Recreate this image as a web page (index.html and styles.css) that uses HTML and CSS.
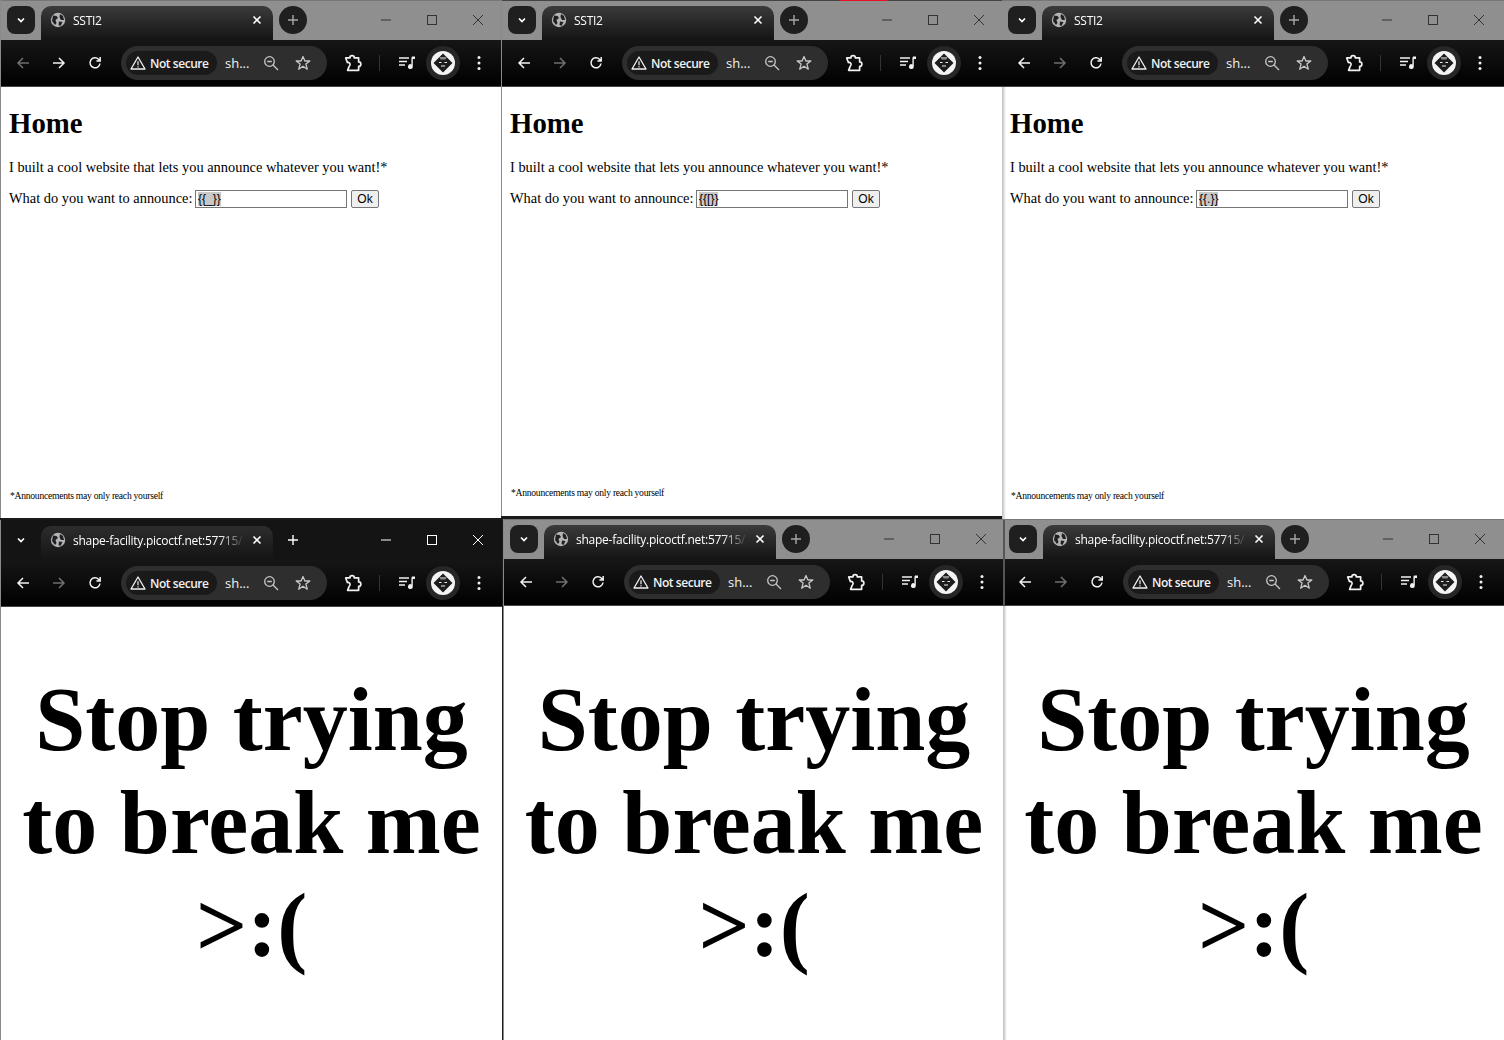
FILE: index.html
```html
<!DOCTYPE html>
<html lang="en">

<head>
    <meta charset="UTF-8">
    <title>SSTI2</title>
    <link rel="stylesheet" href="styles.css">
</head>

<body>
    <svg class="sprites" width="0" height="0">
        <symbol id="i-chevron" viewBox="0 0 12 12"><path d="M3 4.5 6 7.5 9 4.5" fill="none" stroke="currentColor" stroke-width="1.7"/></symbol>
        <symbol id="i-globe" viewBox="0 0 16 16"><circle cx="8" cy="8" r="7.2" fill="currentColor"/><path d="M3 3.5 6.5 4 8 6 5.5 8 6.5 11 5 13 2 9ZM10 2 13 4 14 8 11 8 9.5 5ZM9 9.5 12.5 10 10.5 14 8.5 13Z" fill="#202124"/></symbol>
        <symbol id="i-close" viewBox="0 0 10 10"><path d="M1.5 1.5 8.5 8.5M8.5 1.5 1.5 8.5" stroke="currentColor" stroke-width="1.6"/></symbol>
        <symbol id="i-plus" viewBox="0 0 12 12"><path d="M6 1V11M1 6H11" stroke="currentColor" stroke-width="1.4"/></symbol>
        <symbol id="i-back" viewBox="0 0 14 14"><path d="M13 7H2M7 2 2 7 7 12" fill="none" stroke="currentColor" stroke-width="1.5"/></symbol>
        <symbol id="i-forward" viewBox="0 0 14 14"><path d="M1 7H12M7 2 12 7 7 12" fill="none" stroke="currentColor" stroke-width="1.5"/></symbol>
        <symbol id="i-reload" viewBox="0 0 14 14"><path d="M12 7.5A5 5 0 1 1 10.5 3.2L12 4.6M12.2 1V4.9H8.4" fill="none" stroke="currentColor" stroke-width="1.5"/></symbol>
        <symbol id="i-warn" viewBox="0 0 16 16"><path d="M8 2 15 14H1Z" fill="none" stroke="currentColor" stroke-width="1.3" stroke-linejoin="round"/><path d="M8 6.2V10.2M8 11.2V12.6" stroke="currentColor" stroke-width="1.2"/></symbol>
        <symbol id="i-zoom" viewBox="0 0 16 16"><circle cx="6.5" cy="6.5" r="4.8" fill="none" stroke="currentColor" stroke-width="1.3"/><path d="M10 10 15 15M4.2 6.5H8.8" stroke="currentColor" stroke-width="1.3"/></symbol>
        <symbol id="i-star" viewBox="0 0 16 16"><path d="M8 1.5 9.9 6H14.8L10.9 9.1 12.3 14.2 8 11.3 3.7 14.2 5.1 9.1 1.2 6H6.1Z" fill="none" stroke="currentColor" stroke-width="1.3" stroke-linejoin="round"/></symbol>
        <symbol id="i-ext" viewBox="0 0 16 16"><path d="M1.5 3.5H5.2A2 2 0 0 1 9.2 3.5H13V7A1.8 1.8 0 0 1 13 11V14.5H3.2L4.6 11A1.9 1.9 0 0 0 3 7.6Z" fill="none" stroke="currentColor" stroke-width="1.5" stroke-linejoin="round"/></symbol>
        <symbol id="i-media" viewBox="0 0 16 16"><path d="M0 3H10M0 6.5H8M0 10H6" stroke="currentColor" stroke-width="1.5"/><path d="M13 1.5H16V4H13.8V11.5A2.4 2.4 0 1 1 12.4 9.4V3Z" fill="currentColor"/></symbol>
        <symbol id="i-avatar" viewBox="0 0 24 24"><circle cx="12" cy="12" r="12" fill="#f4f4f4"/><path d="M12 2.5 21.5 12 12 21.5 2.5 12Z" fill="#1c1c1c"/><path d="M8.5 6H15.5L14.5 8.5H9.5Z" fill="#8a8a8a"/><path d="M8 11.5H10.5M13.5 11.5H16M10 15H14" stroke="#eee" stroke-width="1.2"/></symbol>
        <symbol id="i-more" viewBox="0 0 4 16"><circle cx="2" cy="2.5" r="1.5" fill="currentColor"/><circle cx="2" cy="8" r="1.5" fill="currentColor"/><circle cx="2" cy="13.5" r="1.5" fill="currentColor"/></symbol>
        <symbol id="i-min" viewBox="0 0 12 12"><path d="M1 6H11" stroke="currentColor"/></symbol>
        <symbol id="i-max" viewBox="0 0 12 12"><rect x="1.5" y="1.5" width="9" height="9" fill="none" stroke="currentColor"/></symbol>
        <symbol id="i-x" viewBox="0 0 12 12"><path d="M1 1 11 11M11 1 1 11" stroke="currentColor"/></symbol>
    </svg>

    <section class="window win-1">
        <div class="tabstrip">
            <span class="strip-btn"><svg class="ico-12"><use href="#i-chevron"/></svg></span>
            <div class="tab"><svg class="ico-16 tab-globe"><use href="#i-globe"/></svg><span class="tab-title">SSTI2</span><svg class="ico-10"><use href="#i-close"/></svg></div>
            <span class="strip-btn new-tab"><svg class="ico-12"><use href="#i-plus"/></svg></span>
            <div class="caption"><svg class="ico-12"><use href="#i-min"/></svg><svg class="ico-12"><use href="#i-max"/></svg><svg class="ico-12"><use href="#i-x"/></svg></div>
        </div>
        <div class="toolbar">
            <svg class="ico-14 nav off"><use href="#i-back"/></svg><svg class="ico-14 nav"><use href="#i-forward"/></svg><svg class="ico-14 nav"><use href="#i-reload"/></svg>
            <div class="omnibox"><span class="chip"><svg class="ico-16"><use href="#i-warn"/></svg>Not secure</span><span class="host">sh...</span><svg class="ico-16 zoom-ico"><use href="#i-zoom"/></svg><svg class="ico-16 star-ico"><use href="#i-star"/></svg></div>
            <svg class="ext"><use href="#i-ext"/></svg><span class="divider"></span><svg class="ico-16 media"><use href="#i-media"/></svg><span class="avatar-ring"><svg class="ico-24"><use href="#i-avatar"/></svg></span><svg class="more"><use href="#i-more"/></svg>
        </div>
        <main class="page">
            <h1 class="home-title">Home</h1>
            <p class="page-text">I built a cool website that lets you announce whatever you want!*</p>
            <div class="announce">What do you want to announce: <div class="fake-input"><span class="selected">{{_}}</span></div><span class="ok-btn">Ok</span></div>
            <small class="footnote">*Announcements may only reach yourself</small>
        </main>
    </section>

    <section class="window win-2">
        <span class="red-sliver"></span>
        <div class="tabstrip">
            <span class="strip-btn"><svg class="ico-12"><use href="#i-chevron"/></svg></span>
            <div class="tab"><svg class="ico-16 tab-globe"><use href="#i-globe"/></svg><span class="tab-title">SSTI2</span><svg class="ico-10"><use href="#i-close"/></svg></div>
            <span class="strip-btn new-tab"><svg class="ico-12"><use href="#i-plus"/></svg></span>
            <div class="caption"><svg class="ico-12"><use href="#i-min"/></svg><svg class="ico-12"><use href="#i-max"/></svg><svg class="ico-12"><use href="#i-x"/></svg></div>
        </div>
        <div class="toolbar">
            <svg class="ico-14 nav"><use href="#i-back"/></svg><svg class="ico-14 nav off"><use href="#i-forward"/></svg><svg class="ico-14 nav"><use href="#i-reload"/></svg>
            <div class="omnibox"><span class="chip"><svg class="ico-16"><use href="#i-warn"/></svg>Not secure</span><span class="host">sh...</span><svg class="ico-16 zoom-ico"><use href="#i-zoom"/></svg><svg class="ico-16 star-ico"><use href="#i-star"/></svg></div>
            <svg class="ext"><use href="#i-ext"/></svg><span class="divider"></span><svg class="ico-16 media"><use href="#i-media"/></svg><span class="avatar-ring"><svg class="ico-24"><use href="#i-avatar"/></svg></span><svg class="more"><use href="#i-more"/></svg>
        </div>
        <main class="page">
            <h1 class="home-title">Home</h1>
            <p class="page-text">I built a cool website that lets you announce whatever you want!*</p>
            <div class="announce">What do you want to announce: <div class="fake-input"><span class="selected">{{[}}</span></div><span class="ok-btn">Ok</span></div>
            <small class="footnote foot-high">*Announcements may only reach yourself</small>
        </main>
    </section>

    <section class="window win-3">
        <div class="tabstrip">
            <span class="strip-btn"><svg class="ico-12"><use href="#i-chevron"/></svg></span>
            <div class="tab"><svg class="ico-16 tab-globe"><use href="#i-globe"/></svg><span class="tab-title">SSTI2</span><svg class="ico-10"><use href="#i-close"/></svg></div>
            <span class="strip-btn new-tab"><svg class="ico-12"><use href="#i-plus"/></svg></span>
            <div class="caption"><svg class="ico-12"><use href="#i-min"/></svg><svg class="ico-12"><use href="#i-max"/></svg><svg class="ico-12"><use href="#i-x"/></svg></div>
        </div>
        <div class="toolbar">
            <svg class="ico-14 nav"><use href="#i-back"/></svg><svg class="ico-14 nav off"><use href="#i-forward"/></svg><svg class="ico-14 nav"><use href="#i-reload"/></svg>
            <div class="omnibox"><span class="chip"><svg class="ico-16"><use href="#i-warn"/></svg>Not secure</span><span class="host">sh...</span><svg class="ico-16 zoom-ico"><use href="#i-zoom"/></svg><svg class="ico-16 star-ico"><use href="#i-star"/></svg></div>
            <svg class="ext"><use href="#i-ext"/></svg><span class="divider"></span><svg class="ico-16 media"><use href="#i-media"/></svg><span class="avatar-ring"><svg class="ico-24"><use href="#i-avatar"/></svg></span><svg class="more"><use href="#i-more"/></svg>
        </div>
        <main class="page">
            <h1 class="home-title">Home</h1>
            <p class="page-text">I built a cool website that lets you announce whatever you want!*</p>
            <div class="announce">What do you want to announce: <div class="fake-input"><span class="selected">{{.}}</span></div><span class="ok-btn">Ok</span></div>
            <small class="footnote">*Announcements may only reach yourself</small>
        </main>
    </section>

    <section class="window win-4 focused">
        <div class="tabstrip">
            <span class="strip-btn"><svg class="ico-12"><use href="#i-chevron"/></svg></span>
            <div class="tab"><svg class="ico-16 tab-globe"><use href="#i-globe"/></svg><span class="tab-title">shape-facility.picoctf.net:57715/</span><svg class="ico-10"><use href="#i-close"/></svg></div>
            <span class="strip-btn new-tab"><svg class="ico-12"><use href="#i-plus"/></svg></span>
            <div class="caption"><svg class="ico-12"><use href="#i-min"/></svg><svg class="ico-12"><use href="#i-max"/></svg><svg class="ico-12"><use href="#i-x"/></svg></div>
        </div>
        <div class="toolbar">
            <svg class="ico-14 nav"><use href="#i-back"/></svg><svg class="ico-14 nav off"><use href="#i-forward"/></svg><svg class="ico-14 nav"><use href="#i-reload"/></svg>
            <div class="omnibox"><span class="chip"><svg class="ico-16"><use href="#i-warn"/></svg>Not secure</span><span class="host">sh...</span><svg class="ico-16 zoom-ico"><use href="#i-zoom"/></svg><svg class="ico-16 star-ico"><use href="#i-star"/></svg></div>
            <svg class="ext"><use href="#i-ext"/></svg><span class="divider"></span><svg class="ico-16 media"><use href="#i-media"/></svg><span class="avatar-ring"><svg class="ico-24"><use href="#i-avatar"/></svg></span><svg class="more"><use href="#i-more"/></svg>
        </div>
        <main class="page page-stop"><h1 class="stop-title">Stop trying to break me &gt;:(</h1></main>
    </section>

    <section class="window win-5">
        <div class="tabstrip">
            <span class="strip-btn"><svg class="ico-12"><use href="#i-chevron"/></svg></span>
            <div class="tab"><svg class="ico-16 tab-globe"><use href="#i-globe"/></svg><span class="tab-title">shape-facility.picoctf.net:57715/</span><svg class="ico-10"><use href="#i-close"/></svg></div>
            <span class="strip-btn new-tab"><svg class="ico-12"><use href="#i-plus"/></svg></span>
            <div class="caption"><svg class="ico-12"><use href="#i-min"/></svg><svg class="ico-12"><use href="#i-max"/></svg><svg class="ico-12"><use href="#i-x"/></svg></div>
        </div>
        <div class="toolbar">
            <svg class="ico-14 nav"><use href="#i-back"/></svg><svg class="ico-14 nav off"><use href="#i-forward"/></svg><svg class="ico-14 nav"><use href="#i-reload"/></svg>
            <div class="omnibox"><span class="chip"><svg class="ico-16"><use href="#i-warn"/></svg>Not secure</span><span class="host">sh...</span><svg class="ico-16 zoom-ico"><use href="#i-zoom"/></svg><svg class="ico-16 star-ico"><use href="#i-star"/></svg></div>
            <svg class="ext"><use href="#i-ext"/></svg><span class="divider"></span><svg class="ico-16 media"><use href="#i-media"/></svg><span class="avatar-ring"><svg class="ico-24"><use href="#i-avatar"/></svg></span><svg class="more"><use href="#i-more"/></svg>
        </div>
        <main class="page page-stop"><h1 class="stop-title">Stop trying to break me &gt;:(</h1></main>
    </section>

    <section class="window win-6">
        <div class="tabstrip">
            <span class="strip-btn"><svg class="ico-12"><use href="#i-chevron"/></svg></span>
            <div class="tab"><svg class="ico-16 tab-globe"><use href="#i-globe"/></svg><span class="tab-title">shape-facility.picoctf.net:57715/</span><svg class="ico-10"><use href="#i-close"/></svg></div>
            <span class="strip-btn new-tab"><svg class="ico-12"><use href="#i-plus"/></svg></span>
            <div class="caption"><svg class="ico-12"><use href="#i-min"/></svg><svg class="ico-12"><use href="#i-max"/></svg><svg class="ico-12"><use href="#i-x"/></svg></div>
        </div>
        <div class="toolbar">
            <svg class="ico-14 nav"><use href="#i-back"/></svg><svg class="ico-14 nav off"><use href="#i-forward"/></svg><svg class="ico-14 nav"><use href="#i-reload"/></svg>
            <div class="omnibox"><span class="chip"><svg class="ico-16"><use href="#i-warn"/></svg>Not secure</span><span class="host">sh...</span><svg class="ico-16 zoom-ico"><use href="#i-zoom"/></svg><svg class="ico-16 star-ico"><use href="#i-star"/></svg></div>
            <svg class="ext"><use href="#i-ext"/></svg><span class="divider"></span><svg class="ico-16 media"><use href="#i-media"/></svg><span class="avatar-ring"><svg class="ico-24"><use href="#i-avatar"/></svg></span><svg class="more"><use href="#i-more"/></svg>
        </div>
        <main class="page page-stop"><h1 class="stop-title">Stop trying to break me &gt;:(</h1></main>
    </section>
</body>

</html>
```

FILE: styles.css
```css
html,
body {
    margin: 0;
    height: 100%;
    overflow: hidden;
}

body {
    position: relative;
    background: #1a1a1a;
    font-family: "Open Sans", sans-serif;
}

.sprites {
    position: absolute;
}

/* windows sit on a desktop, so these are placed by hand */
.window {
    position: absolute;
    display: flex;
    flex-direction: column;
    box-sizing: border-box;
    border-left: 1px solid #8a8a8a;
}

.win-1 { left: 0; top: 0; width: 501px; height: 518px; }
.win-2 { left: 501px; top: 0; width: 501px; height: 516px; }
.win-3 { left: 1002px; top: 0; width: 502px; height: 519px; border-left: 0; }
.win-4 { left: 0; top: 520px; width: 502px; height: 520px; }
.win-5 { left: 503px; top: 519px; width: 501px; height: 521px; }
.win-6 { left: 1003px; top: 519px; width: 501px; height: 521px; border-left: 0; }

.red-sliver {
    position: absolute;
    left: 338px;
    top: 0;
    width: 48px;
    height: 1px;
    background: #e81123;
}

.tabstrip {
    display: flex;
    align-items: flex-start;
    flex: 0 0 40px;
    box-sizing: border-box;
    padding: 6px 0 0 6px;
    background: #8f8f8f;
    border-top: 1px solid #777;
    color: #fff;
}

.win-2 .tabstrip {
    border-top-color: #444;
}

.focused .tabstrip {
    background: #141414;
    border-top-color: #141414;
}

.strip-btn {
    display: flex;
    align-items: center;
    justify-content: center;
    width: 28px;
    height: 28px;
    margin-top: -1px;
    border-radius: 8px;
    background: #1f1f1f;
}

.focused .strip-btn {
    background: transparent;
}

.new-tab {
    margin-left: 6px;
    border-radius: 50%;
    color: #a8a8a8;
}

.focused .new-tab {
    color: #fff;
}

.tab {
    display: flex;
    align-items: center;
    gap: 7px;
    width: 232px;
    height: 34px;
    margin: -1px 0 0 6px;
    padding: 0 11px 6px 9px;
    box-sizing: border-box;
    border-radius: 10px 10px 0 0;
    background: linear-gradient(#3b3b3b, #141414);
    font-size: 12px;
}

.focused .tab {
    background: linear-gradient(#2d2d2d, #141414);
}

.tab-globe {
    color: #b5b5b5;
    flex: none;
}

.tab-title {
    flex: 1;
    overflow: hidden;
    white-space: nowrap;
    letter-spacing: -0.25px;
    -webkit-mask-image: linear-gradient(90deg, #000 85%, transparent);
    mask-image: linear-gradient(90deg, #000 85%, transparent);
}

.caption {
    display: flex;
    margin-left: auto;
    padding: 7px 17px 0 0;
    gap: 34px;
    color: #333;
}

.win-3 .caption {
    padding-right: 19px;
}

.win-4 .caption,
.win-6 .caption {
    padding-right: 18px;
}

.focused .caption {
    color: #fff;
}

.ico-10 { width: 10px; height: 10px; flex: none; }
.ico-12 { width: 12px; height: 12px; flex: none; }
.ico-14 { width: 14px; height: 14px; flex: none; }
.ico-16 { width: 16px; height: 16px; flex: none; }
.ico-24 { width: 24px; height: 24px; flex: none; }

.toolbar {
    display: flex;
    align-items: center;
    flex: 0 0 47px;
    box-sizing: border-box;
    padding-left: 15px;
    background: linear-gradient(#161616, #000);
    border-bottom: 1px solid #444;
    color: #f2f2f2;
}

.win-6 .tabstrip,
.win-6 .toolbar {
    box-shadow: inset 2px 0 #555;
}

.nav {
    margin-right: 22px;
}

.nav.off {
    color: #6f6f6f;
}

.omnibox {
    display: flex;
    align-items: center;
    width: 206px;
    height: 34px;
    margin-left: -3px;
    padding-left: 5px;
    box-sizing: border-box;
    border-radius: 17px;
    background: #2e2e2e;
    font-size: 12px;
    font-weight: 600;
}

.chip {
    display: flex;
    align-items: center;
    gap: 4px;
    width: 91px;
    height: 24px;
    padding-left: 4px;
    box-sizing: border-box;
    border-radius: 12px;
    background: #1a1a1a;
    letter-spacing: -0.45px;
    white-space: nowrap;
}

.host {
    margin-left: 8px;
    font-size: 13px;
    font-weight: 500;
}

.zoom-ico {
    margin-left: 14px;
    color: #c8c8c8;
}

.star-ico {
    margin-left: 16px;
    color: #c8c8c8;
}

.ext {
    width: 18px;
    height: 18px;
    flex: none;
    margin-left: 17px;
}

.divider {
    width: 1px;
    height: 16px;
    margin-left: 17px;
    background: #333;
}

.media {
    margin-left: 19px;
}

.avatar-ring {
    display: flex;
    align-items: center;
    justify-content: center;
    width: 34px;
    height: 34px;
    margin-left: 11px;
    border-radius: 50%;
    background: #262626;
}

.more {
    width: 4px;
    height: 16px;
    margin-left: 17px;
}

.page {
    position: relative;
    flex: 1;
    padding: 0 8px;
    background: #fff;
    color: #000;
    font-family: "Liberation Serif", serif;
    font-size: 14.4px;
}

.win-3 .page,
.win-6 .page {
    background: linear-gradient(90deg, #bdbdbd, #fff 4px);
}

.home-title {
    margin: 20px 0 0;
    font-size: 28.8px;
}

.page-text {
    margin: 19px 0 0;
}

.announce {
    display: flex;
    align-items: flex-start;
    margin-top: 14px;
    white-space: pre;
}

.fake-input {
    display: flex;
    align-items: center;
    box-sizing: border-box;
    width: 152px;
    height: 18px;
    margin-left: -1px;
    padding-left: 2px;
    border: 1px solid #767676;
    font-family: "Liberation Sans", sans-serif;
    font-size: 12px;
}

.selected {
    background: #c8c8c8;
}

.ok-btn {
    display: flex;
    align-items: center;
    justify-content: center;
    box-sizing: border-box;
    width: 28px;
    height: 18px;
    margin-left: 4px;
    border: 1px solid #767676;
    border-radius: 2px;
    background: #efefef;
    font-family: "Liberation Sans", sans-serif;
    font-size: 12px;
}

.footnote {
    position: absolute;
    left: 9px;
    top: 403px;
    font-size: 9.6px;
    letter-spacing: -0.25px;
}

.foot-high {
    top: 400px;
}

.page-stop {
    text-align: center;
}

.stop-title {
    margin: 62px 0 0;
    font-size: 90px;
    line-height: 103px;
}

.focused .stop-title {
    margin-top: 61px;
}
```
